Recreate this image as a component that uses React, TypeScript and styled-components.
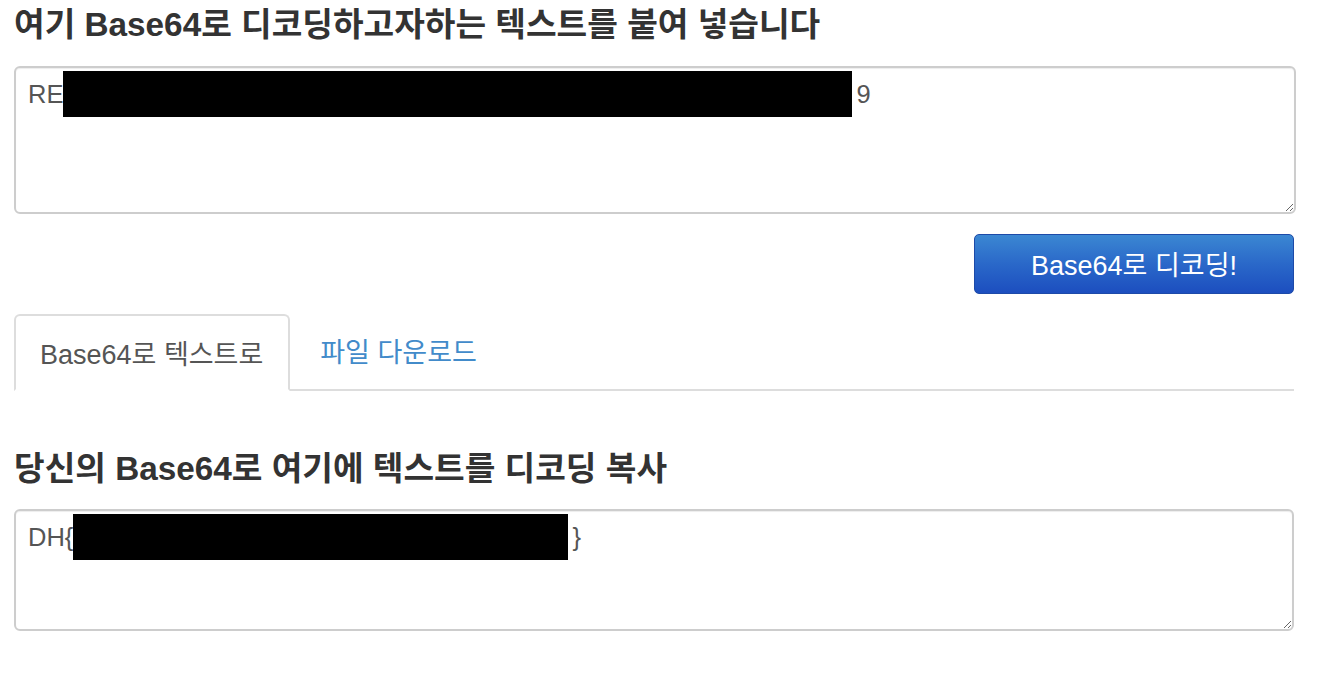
import styled, { createGlobalStyle } from "styled-components";

const GlobalStyle = createGlobalStyle`
    body {
        margin: 0;
        background: #fff;
        font-family: "Liberation Sans", "Noto Sans CJK KR", Arial, sans-serif;
    }
`;

const App = () => {
    return (
        <Page>
            <GlobalStyle />
            <Title>여기 Base64로 디코딩하고자하는 텍스트를 붙여 넣습니다</Title>
            <TextBox $height={148} $wide>
                RE<Redacted $width={789} />9
            </TextBox>
            <ButtonRow>
                <DecodeButton>Base64로 디코딩!</DecodeButton>
            </ButtonRow>
            <Tabs>
                <Tab $active>Base64로 텍스트로</Tab>
                <Tab>파일 다운로드</Tab>
            </Tabs>
            <Title $spaced>당신의 Base64로 여기에 텍스트를 디코딩 복사</Title>
            <TextBox $height={122}>
                DH{"{"}<Redacted $width={495} />{"}"}
            </TextBox>
        </Page>
    );
};

export default App;

const Page = styled.div`
    padding: 7px 28px 0 14px;
    display: flex;
    flex-direction: column;
`;

const Title = styled.h3<{ $spaced?: boolean }>`
    margin: ${(p) => (p.$spaced ? "60px" : "0")} 0 0 0;
    font-size: 33.3px;
    font-weight: bold;
    line-height: 1.1;
    color: #333;
`;

const TextBox = styled.div<{ $height: number; $wide?: boolean }>`
    box-sizing: border-box;
    margin-top: 22px;
    margin-right: ${(p) => (p.$wide ? "-2px" : "0")};
    height: ${(p) => p.$height}px;
    padding: 3px 12px;
    border: 2px solid #cdcdcd;
    border-radius: 6px;
    box-shadow: inset 0 1px 1px rgba(0, 0, 0, 0.075);
    font-size: 25.5px;
    line-height: 34px;
    color: #555;
    overflow: auto;
    resize: vertical;
    white-space: nowrap;
`;

const Redacted = styled.span<{ $width: number }>`
    display: inline-block;
    width: ${(p) => p.$width}px;
    height: 46px;
    background: #000;
    vertical-align: -14px;
    margin-right: 4px;
`;

const ButtonRow = styled.div`
    display: flex;
    justify-content: flex-end;
    margin-top: 20px;
`;

const DecodeButton = styled.button`
    width: 320px;
    height: 60px;
    padding: 0;
    border: 1px solid #1d4aa8;
    border-radius: 5px;
    background: linear-gradient(to bottom, #3b87d2 0%, #2a68c9 50%, #1c4ebf 100%);
    color: #fff;
    font-family: "Liberation Sans", "Noto Sans CJK KR", Arial, sans-serif;
    font-size: 27px;
    cursor: pointer;
`;

const Tabs = styled.div`
    display: flex;
    align-items: flex-end;
    margin-top: 18px;
    border-bottom: 2px solid #ddd;
`;

const Tab = styled.div<{ $active?: boolean }>`
    box-sizing: border-box;
    height: 77px;
    display: flex;
    align-items: center;
    margin-bottom: ${(p) => (p.$active ? "-2px" : "0")};
    padding: 0 25px 0 ${(p) => (p.$active ? "24px" : "28px")};
    font-size: 27px;
    color: ${(p) => (p.$active ? "#555" : "#428bca")};
    background: ${(p) => (p.$active ? "#fff" : "transparent")};
    border: 2px solid ${(p) => (p.$active ? "#ddd" : "transparent")};
    border-bottom-color: ${(p) => (p.$active ? "#fff" : "transparent")};
    border-radius: 6px 6px 0 0;
`;
